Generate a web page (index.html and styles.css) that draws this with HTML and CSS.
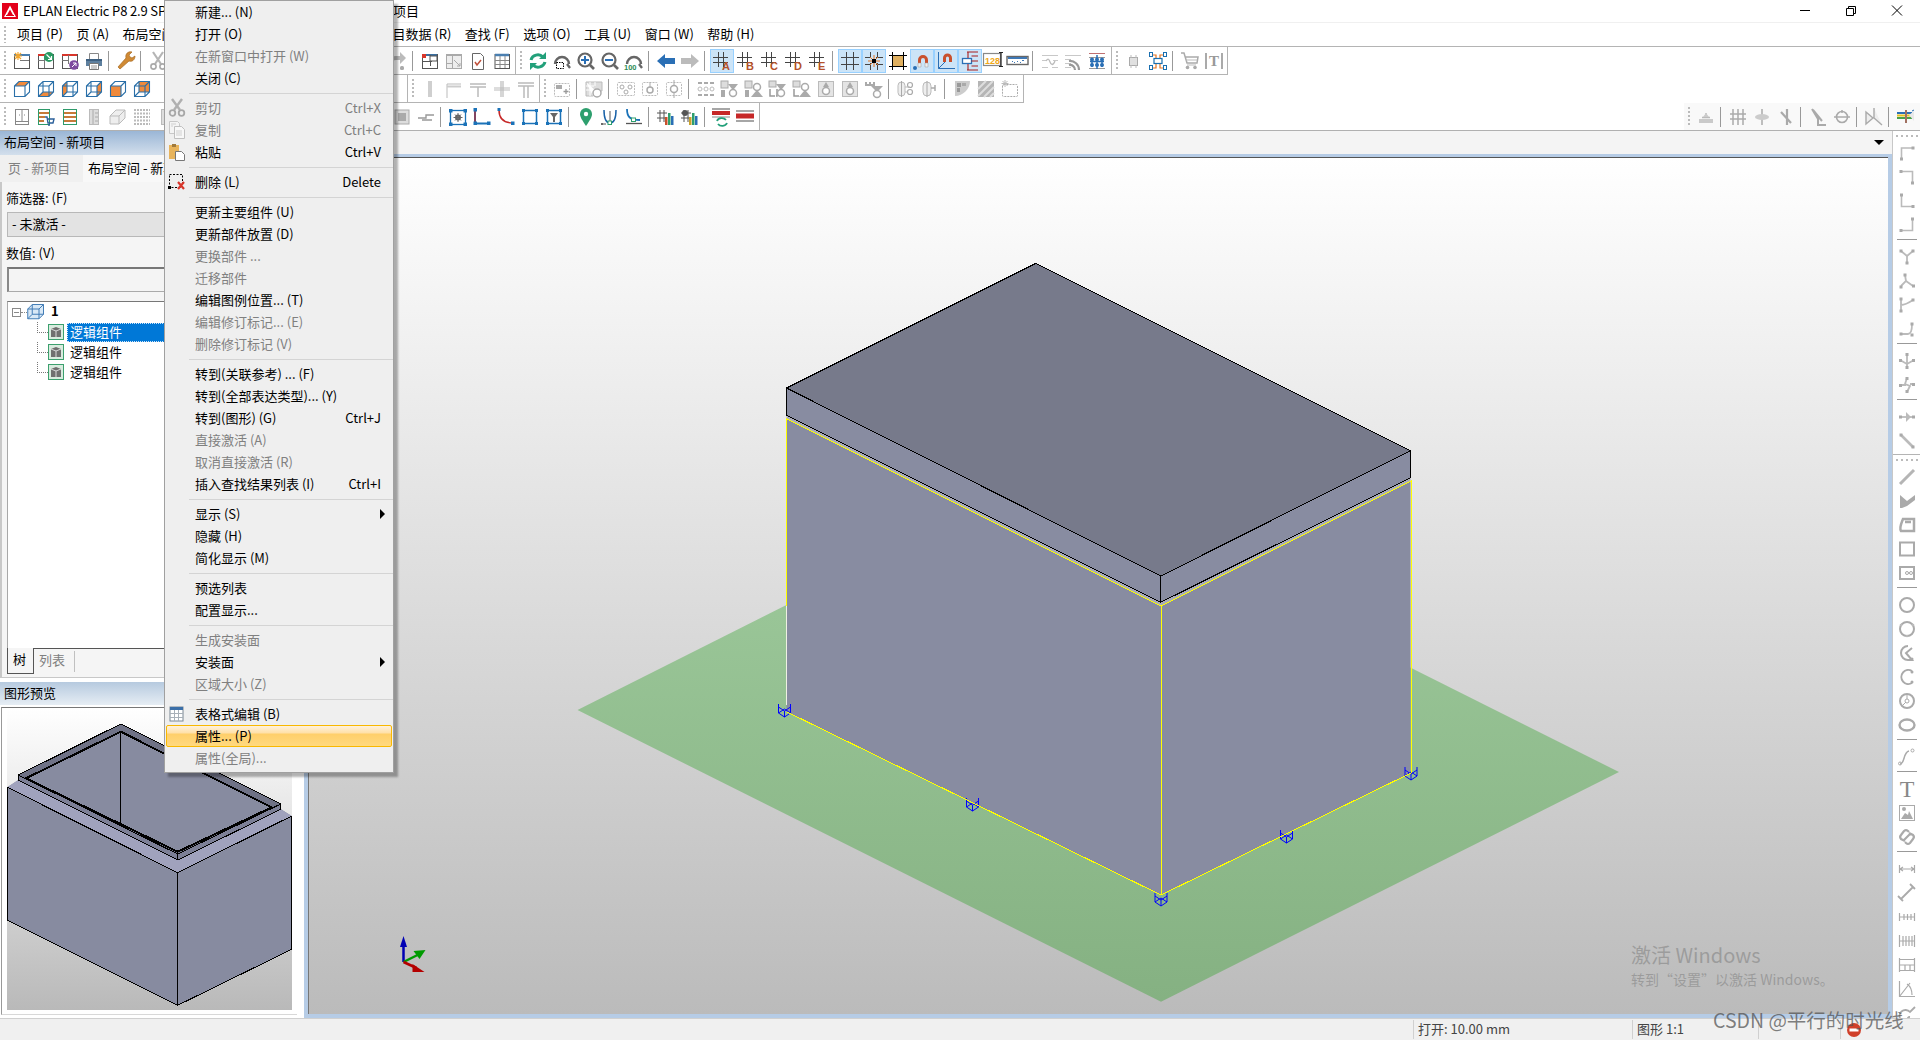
FILE: index.html
```html
<!DOCTYPE html>
<html lang="zh-CN">
<head>
<meta charset="utf-8">
<title>EPLAN Electric P8</title>
<link rel="stylesheet" href="styles.css">
</head>
<body>
<svg class="defs" aria-hidden="true">
<defs>
<symbol id="n1" viewBox="-3 -3 24 24"><rect x="1.5" y="2.5" width="15" height="14" fill="#fff" stroke="#555"/><path d="M1 3h16" stroke="#4a7fb0" stroke-width="2"/><path d="M5 0v8M1 4h8M2 1l6 6M8 1L2 7" stroke="#f2a62e" stroke-width="1.2"/><path d="M7 8.5h9" stroke="#777"/></symbol>
<symbol id="n2" viewBox="-3 -3 24 24"><rect x="1.5" y="2.5" width="15" height="14" fill="#fff" stroke="#555"/><path d="M1 3h8" stroke="#d8362b" stroke-width="2"/><path d="M7.5 3v13M1 8.5h7" stroke="#777"/><circle cx="12" cy="5" r="5" fill="#2a9a62"/><path d="M9.5 2.5l5 5M14.5 4v3.5H11" stroke="#fff" fill="none" stroke-width="1.2"/></symbol>
<symbol id="n3" viewBox="-3 -3 24 24"><rect x="1.5" y="2.5" width="15" height="14" fill="#fff" stroke="#555"/><path d="M1 3h15" stroke="#d8362b" stroke-width="2"/><path d="M7.5 3v9M1 8.5h6" stroke="#777"/><circle cx="13" cy="13" r="4.8" fill="#7d4a9e"/><path d="M11 15l4-4M12 11h3v3" stroke="#fff" fill="none"/></symbol>
<symbol id="pr" viewBox="-3 -3 24 24"><path d="M4.5 1.5h9v6h-9z" fill="#fff" stroke="#888"/><path d="M1 7h16v7H1z" fill="#5d7f9e"/><path d="M1 7h16v2H1z" fill="#3c5f80"/><path d="M4.5 11.5h9v6h-9z" fill="#fff" stroke="#777"/><path d="M6 14h6M6 16h6" stroke="#999"/></symbol>
<symbol id="wr" viewBox="-3 -3 24 24"><path d="M1 15l2 2 9-8c3 1 6-1 6-5l-3 2-2-1-1-2 3-3c-4-1-7 2-6 6z" fill="#d08a34" stroke="#a66a22" stroke-width=".7"/></symbol>
<symbol id="sc" viewBox="-3 -3 24 24"><path d="M4 0l8 12M14 0L6 12" stroke="#b5b5b5" stroke-width="2.2"/><circle cx="4.5" cy="14.5" r="2.6" fill="none" stroke="#aaa" stroke-width="1.6"/><circle cx="13.5" cy="14.5" r="2.6" fill="none" stroke="#aaa" stroke-width="1.6"/></symbol>
<symbol id="rd" viewBox="-3 -3 24 24"><path d="M1 9a6 6 0 0 1 6-5h4V0l6 6-6 6V8H7" fill="#bbb"/><rect x="11" y="14" width="4" height="4" rx="1.5" fill="#aaa"/></symbol>
<symbol id="w1" viewBox="-3 -3 24 24"><rect x="1.5" y="2.5" width="15" height="14" fill="#fff" stroke="#555"/><path d="M1 3h15" stroke="#3b6f9f" stroke-width="2"/><rect x="1" y="2" width="4" height="4" fill="#d8362b"/><path d="M1 9.500h10M9.500 3v11" stroke="#555"/><rect x="9" y="4" width="7" height="5" fill="#fff" stroke="#555"/></symbol>
<symbol id="w2" viewBox="-3 -3 24 24"><rect x="1.500" y="2.500" width="15" height="14" fill="#eee" stroke="#aaa"/><path d="M2 3.500h14M2 11.500h5M7.500 4v12M9 8l6 6M15 11v3h-3" stroke="#aaa" fill="none"/></symbol>
<symbol id="dc" viewBox="-3 -3 24 24"><path d="M3.500 1.500h8l3 3v13h-11z" fill="#fff" stroke="#666"/><path d="M6 10l2 3 4-5" stroke="#c0503a" stroke-width="1.500" fill="none"/></symbol>
<symbol id="tb" viewBox="-3 -3 24 24"><rect x="2" y="2.500" width="14.500" height="14" fill="#fff" stroke="#555"/><path d="M2 3h14" stroke="#4a7fb0" stroke-width="2.500"/><path d="M2 8.500h14M2 12.500h14M7 4v12M12 4v12" stroke="#888"/></symbol>
<symbol id="rf" viewBox="-3 -3 24 24"><path d="M2 8a7 6.500 0 0 1 12-3M16 10a7 6.500 0 0 1-12 3" stroke="#22a07a" stroke-width="3" fill="none"/><path d="M17 0v7h-7zM1 18v-7h7z" fill="#22a07a"/></symbol>
<symbol id="zw" viewBox="-3 -3 24 24"><path d="M2 12a7 7 0 1 1 14 0" stroke="#666" stroke-width="2.400" fill="none"/><path d="M14 12l3 4" stroke="#666" stroke-width="2.400"/><rect x="3.500" y="10.500" width="7" height="6" fill="#fff" stroke="#000" stroke-dasharray="1.500 1"/></symbol>
<symbol id="zp" viewBox="-3 -3 24 24"><circle cx="8" cy="8" r="6.500" fill="#fff" stroke="#666" stroke-width="2.200"/><path d="M13 13l4 4" stroke="#666" stroke-width="2.600"/><path d="M4 8h8M8 4v8" stroke="#2a6fb5" stroke-width="2"/></symbol>
<symbol id="zm" viewBox="-3 -3 24 24"><circle cx="8" cy="8" r="6.500" fill="#fff" stroke="#666" stroke-width="2.200"/><path d="M13 13l4 4" stroke="#666" stroke-width="2.600"/><path d="M4 8h8" stroke="#2a6fb5" stroke-width="2"/></symbol>
<symbol id="z1" viewBox="-3 -3 24 24"><path d="M2 12a7 7 0 1 1 14 0" stroke="#666" stroke-width="2.400" fill="none"/><path d="M14 12l3 4" stroke="#666" stroke-width="2.400"/><text x="-1" y="18" class="t100">100</text></symbol>
<symbol id="al" viewBox="-3 -3 24 24"><path d="M0 9l8-7v4h10v6H8v4z" fill="#2a6fb5"/></symbol>
<symbol id="ar" viewBox="-3 -3 24 24"><path d="M18 9l-8-7v4H0v6h10v4z" fill="#bbb"/></symbol>
<symbol id="gr" viewBox="-3 -3 24 24"><path d="M5.500 0v15M10.500 0v15M0 5.500h15M0 10.500h15" stroke="#444"/></symbol>
<symbol id="gc" viewBox="-3 -3 24 24"><path d="M5.500 0v6M5.500 11v7M12.500 0v6M12.500 11v7M0 5.500h6M11 5.500h7M0 12.500h6M11 12.500h7" stroke="#444"/><path d="M9 3v12M3 9h12M5 5l8 8M13 5l-8 8" stroke="#e8741e"/><rect x="7" y="7" width="4" height="4" fill="#000"/></symbol>
<symbol id="fg" viewBox="-3 -3 24 24"><path d="M5.500 0v18M12.500 0v18M0 5.500h18M0 12.500h18" stroke="#444"/></symbol>
<symbol id="cr" viewBox="-3 -3 24 24"><rect x="4" y="4" width="10" height="10" fill="#e0b060"/><path d="M3.500 0v18M14.500 0v18M0 3.500h18M0 14.500h18" stroke="#000"/></symbol>
<symbol id="m1" viewBox="-3 -3 24 24"><path d="M5 13V8a5 5 0 0 1 10 0v5h-3V8a2 2 0 0 0-4 0v5z" fill="#c9502c"/><path d="M5 11h3v4H5zM12 11h3v4h-3z" fill="#eee" stroke="#999" stroke-width=".5"/><circle cx="2" cy="16" r="2" fill="#2a6fb5"/></symbol>
<symbol id="m2" viewBox="-3 -3 24 24"><path d="M6 10V6a4.500 4.500 0 0 1 9 0v4h-3V6a1.500 1.500 0 0 0-3 0v4z" fill="#c9502c"/><path d="M1.500 0v16.500H18M1.500 16.500L8 10" stroke="#2a6fb5" fill="none"/></symbol>
<symbol id="m3" viewBox="-3 -3 24 24"><rect x="1.500" y="6.500" width="9" height="5" fill="#fff" stroke="#2a6fb5" stroke-width="1.300"/><path d="M7 0v6M6 0h11M10.500 4H17M10.500 9H17M10.500 14H17M7 12v6M6 18h11" stroke="#a81e1e" fill="none" stroke-width="1.100"/></symbol>
<symbol id="n8" viewBox="-3 -3 24 24"><rect x="-1.500" y="1.500" width="17" height="12" fill="#fff" stroke="#888" stroke-width="1.200"/><text x="0" y="11.500" class="t128">128</text><path d="M16 0v15M14 .5h4M14 14.500h4" stroke="#222" stroke-width="1.200"/></symbol>
<symbol id="rl" viewBox="-3 -3 24 24"><rect x="-2" y="4.500" width="21" height="8" fill="#fff" stroke="#666" stroke-width="1.400"/><rect x="-1" y="5" width="19" height="2" fill="#3f78b5"/><path d="M5 10.500h1M8 9.500h1M11 10.500h1M13 8.500h2M3 9.500h1" stroke="#3f78b5"/></symbol>
<symbol id="l1" viewBox="-3 -3 24 24"><path d="M1 3.500h16M1 15.500h6M11 15.500h6M1 8.500h5M12 8.500h5" stroke="#c8c8c8"/><path d="M5 9c2-3 3-2 4 1s3 4 5-1" stroke="#bbb" stroke-width="1.300" fill="none"/></symbol>
<symbol id="l2" viewBox="-3 -3 24 24"><path d="M0 3.500h16M0 7.500h6M0 11.500h6M0 15.500h6" stroke="#c8c8c8"/><path d="M4 9a9 9 0 0 1 10 9M4 13a5 5 0 0 1 6 5" stroke="#999" stroke-width="2.200" fill="none"/></symbol>
<symbol id="l3" viewBox="-3 -3 24 24"><path d="M0 1.500h16" stroke="#c07070"/><path d="M0 5.500h16M0 16.500h16" stroke="#999"/><path d="M8 3v14M3 7v8M13 7v8M1 9.500h14" stroke="#2a6fb5" stroke-width="1.500"/><circle cx="3" cy="7.500" r="2" fill="#2a6fb5"/><circle cx="8" cy="7.500" r="2" fill="#2a6fb5"/><circle cx="13" cy="7.500" r="2" fill="#2a6fb5"/><circle cx="3" cy="13" r="2" fill="#2a6fb5"/><circle cx="8" cy="13" r="2" fill="#2a6fb5"/><circle cx="13" cy="13" r="2" fill="#2a6fb5"/></symbol>
<symbol id="cp" viewBox="-3 -3 24 24"><rect x="4.500" y="5.500" width="8" height="8" fill="#e0e0e0" stroke="#aaa"/><path d="M6 3v3M11 3v3M6 13v3M11 13v3" stroke="#bbb"/></symbol>
<symbol id="bo" viewBox="-3 -3 24 24"><path d="M3 3h4v5h4V3h4M3 16h4v-5h4v5h4" stroke="#e8741e" stroke-width="1.200" fill="none"/><rect x="5" y="6.500" width="8" height="5" fill="#fff" stroke="#1a6fb0" stroke-width="1.200"/><rect x="0.500" y="0.500" width="3" height="4" fill="#fff" stroke="#1a6fb0"/><rect x="14.500" y="0.500" width="3" height="4" fill="#fff" stroke="#1a6fb0"/><rect x="0.500" y="13.500" width="3" height="4" fill="#fff" stroke="#1a6fb0"/><rect x="14.500" y="13.500" width="3" height="4" fill="#fff" stroke="#1a6fb0"/></symbol>
<symbol id="ca" viewBox="-3 -3 24 24"><path d="M0 1h3l3 10h10l1-6H4" stroke="#aaa" stroke-width="1.500" fill="none"/><path d="M5 8h11M6 13h9" stroke="#bbb"/><circle cx="6.500" cy="15.500" r="1.800" fill="#aaa"/><circle cx="14" cy="15.500" r="1.800" fill="#aaa"/></symbol>
<symbol id="tx" viewBox="-3 -3 24 24"><path d="M1 1v16M17 1v16" stroke="#aaa" stroke-width="2"/><text x="4" y="14" class="tser">T</text></symbol>

<symbol id="c1" viewBox="-3 -3 24 24"><path d="M1.500 6L6 1.500h10.500L12 6z" fill="#f08a3c"/><path d="M1.500 6L6 1.500h10.500V12L12 16.500H1.500zM1.500 6H12v10.500M12 6l4.500-4.500" fill="none" stroke="#2a6fa8" stroke-width="1.100"/></symbol>
<symbol id="c2" viewBox="-3 -3 24 24"><path d="M1.500 16.500L6 12h10.500L12 16.500z" fill="#f08a3c"/><path d="M1.500 6L6 1.500h10.500V12L12 16.500H1.500zM1.500 6H12v10.500M12 6l4.500-4.500M6 1.500V12M6 12h10.500M6 12l-4.500 4.500" fill="none" stroke="#2a6fa8" stroke-width="1.100"/></symbol>
<symbol id="c3" viewBox="-3 -3 24 24"><path d="M1.500 6L6 1.500V12l-4.500 4.500z" fill="#f08a3c"/><path d="M1.500 6L6 1.500h10.500V12L12 16.500H1.500zM1.500 6H12v10.500M12 6l4.500-4.500M6 1.500V12M6 12h10.500M6 12l-4.500 4.500" fill="none" stroke="#2a6fa8" stroke-width="1.100"/></symbol>
<symbol id="c4" viewBox="-3 -3 24 24"><path d="M12 6l4.500-4.500V12L12 16.500z" fill="#f08a3c"/><path d="M1.500 6L6 1.500h10.500V12L12 16.500H1.500zM1.500 6H12v10.500M12 6l4.500-4.500M6 1.500V12M6 12h10.500M6 12l-4.500 4.500" fill="none" stroke="#2a6fa8" stroke-width="1.100"/></symbol>
<symbol id="c5" viewBox="-3 -3 24 24"><path d="M1.500 6H12v10.500H1.500z" fill="#f08a3c"/><path d="M1.500 6L6 1.500h10.500V12L12 16.500H1.500zM1.500 6H12v10.500M12 6l4.500-4.500" fill="none" stroke="#2a6fa8" stroke-width="1.100"/></symbol>
<symbol id="c6" viewBox="-3 -3 24 24"><path d="M6 1.500h10.500V12H6z" fill="#f08a3c"/><path d="M1.500 6L6 1.500h10.500V12L12 16.500H1.500zM1.500 6H12v10.500M12 6l4.500-4.500M6 1.500V12M6 12h10.500M6 12l-4.500 4.500" fill="none" stroke="#2a6fa8" stroke-width="1.100"/></symbol>

<symbol id="k1" viewBox="-3 -3 24 24"><rect x="2.500" y="1.500" width="13" height="15" fill="#fff" stroke="#888"/><path d="M9 1.500v12M2.500 13.500h13M6 7h1M11 7h1" stroke="#888"/></symbol>
<symbol id="k2" viewBox="-3 -3 24 24"><rect x="1.500" y="1.500" width="11" height="15" fill="#fff" stroke="#2e9a6a"/><path d="M2 5h10M2 9h6M2 13h5" stroke="#c67a3a" stroke-width="2"/><path d="M8 9h2l1 6h5l1-4h-6" stroke="#2a5f9a" stroke-width="1.400" fill="none"/><circle cx="12" cy="17" r="1" fill="#2a5f9a"/></symbol>
<symbol id="k3" viewBox="-3 -3 24 24"><rect x="2.500" y="1.500" width="13" height="15" fill="#fff" stroke="#2e9a6a"/><path d="M3 5h12M3 9h12M3 13h12" stroke="#c67a3a" stroke-width="2"/></symbol>
<symbol id="k4" viewBox="-3 -3 24 24"><rect x="4.500" y="1.500" width="9" height="15" fill="#ddd" stroke="#bbb"/><path d="M8 2v14M10 5h3M10 9h3M10 13h3" stroke="#aaa"/></symbol>
<symbol id="k5" viewBox="-3 -3 24 24"><path d="M1 8l6-6h9v8l-6 6H1z" fill="#eee" stroke="#bbb"/><path d="M1 8h9v8M10 8l6-6" fill="none" stroke="#bbb"/></symbol>
<symbol id="k6" viewBox="-3 -3 24 24"><path d="M1 2h16M1 9h16M1 16h16M1 5.500h16M1 12.500h16" stroke="#bbb" stroke-dasharray="2 1" stroke-width="2"/></symbol>
<symbol id="k7" viewBox="-3 -3 24 24"><rect x="2" y="2" width="14" height="14" fill="#ddd" stroke="#aaa"/><rect x="5" y="5" width="8" height="8" fill="#aaa"/></symbol>
<symbol id="k8" viewBox="-3 -3 24 24"><path d="M1 10h8V7h8M5 12h10" stroke="#999" stroke-width="1.400" fill="none"/></symbol>

<symbol id="h1" viewBox="-3 -3 24 24"><path d="M8 1v16M10 1v16" stroke="#bbb" stroke-width="1.400"/></symbol>
<symbol id="h2" viewBox="-3 -3 24 24"><path d="M2 18V4h14M2 18" stroke="#bbb" fill="none"/><path d="M2 6.500h14" stroke="#ccc" stroke-width="2"/></symbol>
<symbol id="h3" viewBox="-3 -3 24 24"><path d="M1 4h16M1 7h16M9 7v10" stroke="#bbb" stroke-width="1.500"/></symbol>
<symbol id="h4" viewBox="-3 -3 24 24"><path d="M8 1v16M10 1v16M1 8h16M1 10h16" stroke="#bbb" stroke-width="1.200"/></symbol>
<symbol id="h5" viewBox="-3 -3 24 24"><path d="M1 3h16M1 6h16M7 6v12M11 6v12" stroke="#bbb" stroke-width="1.500"/></symbol>
<symbol id="d1" viewBox="-3 -3 24 24"><rect x="1.500" y="3.500" width="15" height="13" rx="1" fill="none" stroke="#bbb" stroke-dasharray="2 1"/><path d="M3 6h6M3 8h6" stroke="#aaa" stroke-width="2"/><path d="M13 9v5M10.500 11.500h5" stroke="#999" stroke-width="1.300"/></symbol>
<symbol id="d2" viewBox="-3 -3 24 24"><path d="M1 2h16v9h-6M1 2v14h7" stroke="#bbb" fill="#ddd"/><path d="M1 6h8M1 10h6M5 2v14M10 2v4" stroke="#fff"/><circle cx="12" cy="13" r="4" fill="#fff" stroke="#aaa" stroke-width="1.500"/></symbol>
<symbol id="d3" viewBox="-3 -3 24 24"><rect x=".5" y="2.500" width="17" height="13" rx="1" fill="none" stroke="#bbb" stroke-dasharray="2 1"/><circle cx="5" cy="7" r="2" fill="none" stroke="#aaa"/><circle cx="13" cy="7" r="2" fill="none" stroke="#aaa"/><circle cx="9" cy="12" r="2" fill="none" stroke="#aaa"/></symbol>
<symbol id="d4" viewBox="-3 -3 24 24"><rect x="1.500" y="2.500" width="15" height="13" rx="1" fill="none" stroke="#bbb" stroke-dasharray="2 1"/><circle cx="9" cy="10" r="3" fill="none" stroke="#aaa" stroke-width="1.500"/><path d="M9 2v5" stroke="#aaa"/></symbol>
<symbol id="d5" viewBox="-3 -3 24 24"><rect x="1.500" y="2.500" width="15" height="13" rx="1" fill="none" stroke="#bbb" stroke-dasharray="2 1"/><circle cx="9" cy="9" r="3.500" fill="none" stroke="#aaa" stroke-width="1.500"/><path d="M9 0v5M9 13v5" stroke="#aaa"/></symbol>
<symbol id="e1" viewBox="-3 -3 24 24"><path d="M1 3h4M7 3h4M13 3h4M1 15h4M7 15h4M13 15h4" stroke="#aaa" stroke-width="2"/><circle cx="3" cy="9" r="2" fill="none" stroke="#bbb"/><circle cx="9" cy="9" r="2" fill="none" stroke="#bbb"/><circle cx="15" cy="9" r="2" fill="none" stroke="#bbb"/></symbol>
<symbol id="e2" viewBox="-3 -3 24 24"><rect x="0" y="1" width="7" height="7" fill="#ddd" stroke="#aaa"/><rect x="0" y="10" width="4" height="7" fill="#aaa"/><path d="M7 4h10l-4 5h-2z" fill="#aaa"/><circle cx="12" cy="13" r="3.500" fill="#fff" stroke="#aaa" stroke-width="1.500"/></symbol>
<symbol id="e3" viewBox="-3 -3 24 24"><rect x="0" y="1" width="7" height="7" fill="#ddd" stroke="#aaa"/><rect x="0" y="10" width="4" height="7" fill="#aaa"/><circle cx="12" cy="7" r="3.500" fill="#fff" stroke="#aaa" stroke-width="1.500"/><path d="M6 17h12l-5-6h-2z" fill="#aaa"/></symbol>
<symbol id="e4" viewBox="-3 -3 24 24"><rect x="0" y="1" width="7" height="6" fill="#ddd" stroke="#aaa"/><path d="M1 9v7h5M8 9v7h-1" stroke="#999" stroke-width="1.500" fill="none"/><path d="M7 4h10l-4 5h-2z" fill="#aaa"/><circle cx="12" cy="13" r="3.500" fill="#fff" stroke="#aaa" stroke-width="1.500"/></symbol>
<symbol id="e5" viewBox="-3 -3 24 24"><rect x="0" y="1" width="7" height="6" fill="#ddd" stroke="#aaa"/><path d="M1 9v7h5" stroke="#999" stroke-width="1.500" fill="none"/><circle cx="12" cy="7" r="3.500" fill="#fff" stroke="#aaa" stroke-width="1.500"/><path d="M6 17h12l-5-6h-2z" fill="#aaa"/></symbol>
<symbol id="e6" viewBox="-3 -3 24 24"><rect x="1.500" y="1.500" width="15" height="15" fill="#e4e4e4" stroke="#bbb"/><path d="M9 2l3 5H6z" fill="#aaa"/><circle cx="9" cy="11" r="3.500" fill="#fff" stroke="#aaa" stroke-width="1.500"/></symbol>
<symbol id="e7" viewBox="-3 -3 24 24"><path d="M0 2h2v2h2V2h2v2h2V2h2v4h8l-5 5h-2l-5-5H0z" fill="#aaa"/><circle cx="12" cy="14" r="3.500" fill="#fff" stroke="#aaa" stroke-width="1.500"/></symbol>
<symbol id="e8" viewBox="-3 -3 24 24"><rect x="1" y="2" width="7" height="14" rx="3.500" fill="#eee" stroke="#bbb"/><path d="M4.500 1v16" stroke="#aaa"/><circle cx="13" cy="5" r="2.500" fill="#fff" stroke="#aaa" stroke-width="1.200"/><circle cx="13" cy="12" r="2.500" fill="#fff" stroke="#aaa" stroke-width="1.200"/><path d="M8 7h5M8 12h3" stroke="#bbb"/></symbol>
<symbol id="e9" viewBox="-3 -3 24 24"><rect x="2" y="2" width="8" height="14" rx="4" fill="#eee" stroke="#bbb"/><path d="M6 1v16" stroke="#aaa"/><path d="M10 8h4M14 5v6" stroke="#aaa" stroke-width="1.500"/></symbol>
<symbol id="f1" viewBox="-3 -3 24 24"><path d="M2 1h15c0 8-7 15-15 15z" fill="#ccc"/><rect x="4" y="3" width="4" height="4" fill="#999"/><rect x="9" y="3" width="4" height="3" fill="#aaa"/><rect x="4" y="8" width="3" height="4" fill="#999"/></symbol>
<symbol id="f2" viewBox="-3 -3 24 24"><rect x="1" y="1" width="16" height="16" fill="#b5b5b5"/><path d="M1 9l8-8M1 16L16 1M7 17L17 7M13 17l4-4" stroke="#ddd" stroke-width="2"/></symbol>
<symbol id="f3" viewBox="-3 -3 24 24"><rect x="1.500" y="4.500" width="15" height="12" rx="1" fill="none" stroke="#aaa" stroke-dasharray="2 1"/><path d="M4 0v7M.5 3.500h7M1.500 1l5 5M6.500 1l-5 5" stroke="#bbb"/></symbol>

<symbol id="g1" viewBox="-3 -3 24 24"><rect x="1.500" y="2.500" width="15" height="14" fill="#fff" stroke="#1a72b8" stroke-width="1.300"/><g fill="#1a72b8"><rect x="0" y="1" width="3.500" height="3.500"/><rect x="14.500" y="1" width="3.500" height="3.500"/><rect x="0" y="14.500" width="3.500" height="3.500"/><rect x="14.500" y="14.500" width="3.500" height="3.500"/></g><circle cx="9" cy="9.500" r="3" fill="#666"/><circle cx="9" cy="9.500" r="1" fill="#fff"/><path d="M9 5v9M4.500 9.500h9M6 6.500l6 6M12 6.500l-6 6" stroke="#666"/></symbol>
<symbol id="g2" viewBox="-3 -3 24 24"><path d="M2 1v14.500h14" stroke="#1a72b8" stroke-width="2" fill="none"/><path d="M2 1v14" stroke="#c62828" stroke-width="1.200"/><g fill="#1a72b8"><rect x=".5" y="0" width="3.500" height="3.500"/><rect x=".5" y="13.500" width="3.500" height="3.500"/><rect x="14" y="13.500" width="3.500" height="3.500"/></g></symbol>
<symbol id="g3" viewBox="-3 -3 24 24"><path d="M2 2c0 8 4 13 14 13" stroke="#c62828" stroke-width="1.500" fill="none"/><g fill="#1a72b8"><rect x=".5" y="0" width="3" height="3"/><rect x="14" y="13.500" width="3.500" height="3.500"/></g></symbol>
<symbol id="g4" viewBox="-3 -3 24 24"><rect x="2.500" y="2.500" width="13" height="13" fill="#fff" stroke="#1a72b8" stroke-width="1.500"/><g fill="#1a72b8"><rect x="1" y="1" width="3" height="3"/><rect x="14" y="1" width="3" height="3"/><rect x="1" y="14" width="3" height="3"/><rect x="14" y="14" width="3" height="3"/></g></symbol>
<symbol id="g5" viewBox="-3 -3 24 24"><rect x="2.500" y="2.500" width="13" height="13" fill="#fff" stroke="#1a72b8" stroke-width="1.500"/><g fill="#1a72b8"><rect x="1" y="1" width="3" height="3"/><rect x="14" y="1" width="3" height="3"/><rect x="1" y="14" width="3" height="3"/><rect x="14" y="14" width="3" height="3"/></g><path d="M5 5h8l-3 4v5H8V9z" fill="#666"/></symbol>
<symbol id="p1" viewBox="-3 -3 24 24"><path d="M9 18C5 12 3 9 3 6a6 6 0 0 1 12 0c0 3-2 6-6 12z" fill="#2e9f6e"/><circle cx="9" cy="6" r="2.200" fill="#fff"/></symbol>
<symbol id="p2" viewBox="-3 -3 24 24"><path d="M3 2c0 10 2 13 6 13s6-3 6-13" stroke="#1a62a8" stroke-width="1.500" fill="none"/><path d="M0 16h5M9 3v11" stroke="#555"/><rect x="7" y="13" width="3.500" height="3.500" fill="#fff" stroke="#2e9f6e"/><circle cx="1" cy="16" r="1" fill="#555"/></symbol>
<symbol id="p3" viewBox="-3 -3 24 24"><path d="M2 1c0 8 3 11 13 11" stroke="#1a72b8" stroke-width="1.800" fill="none"/><path d="M1 15.500h16" stroke="#555" stroke-width="1.300"/><rect x="6.500" y="10" width="4" height="3.500" fill="#fff" stroke="#2e9f6e"/></symbol>
<symbol id="q1" viewBox="-3 -3 24 24"><path d="M3 2v12M7 2v12M0 5h10M0 10h10" stroke="#555"/><rect x="8" y="9" width="2.500" height="8" fill="#c9502c"/><rect x="11" y="5" width="2.500" height="12" fill="#2e9f6e"/><rect x="14" y="8" width="2.500" height="9" fill="#2a6fb5"/></symbol>
<symbol id="q2" viewBox="-3 -3 24 24"><path d="M3 2v12M7 2v12M0 5h10M0 10h10" stroke="#555"/><circle cx="4" cy="5" r="3" fill="#555"/><rect x="8" y="9" width="2.500" height="8" fill="#c9a22c"/><rect x="11" y="5" width="2.500" height="12" fill="#2e9f6e"/><rect x="14" y="8" width="2.500" height="9" fill="#2a6fb5"/></symbol>
<symbol id="r1" viewBox="-3 -3 24 24"><path d="M-1 1h18" stroke="#888" stroke-width="1.500"/><path d="M-1 5h18" stroke="#c62828" stroke-width="4"/><path d="M-1 9h18" stroke="#888" stroke-width="1"/><path d="M4 13a5 4 0 0 1 9-1M14 15a5 4 0 0 1-9 1" stroke="#22a07a" stroke-width="1.800" fill="none"/></symbol>
<symbol id="r2" viewBox="-3 -3 24 24"><path d="M-1 3h18" stroke="#888" stroke-width="1.500"/><path d="M-1 8h18" stroke="#c62828" stroke-width="5"/><path d="M-1 13h18" stroke="#888" stroke-width="1.500"/></symbol>
<symbol id="s1" viewBox="-3 -3 24 24"><path d="M2 14h14M2 12h14M5 9.500h8M9 5v5" stroke="#bbb" stroke-width="1.500"/><path d="M6 9l3-4 3 4" fill="#ccc"/></symbol>
<symbol id="s2" viewBox="-3 -3 24 24"><path d="M4 1v16M9 1v16M14 1v16M1 6h16M1 11h16" stroke="#aaa" stroke-width="1.500"/></symbol>
<symbol id="s3" viewBox="-3 -3 24 24"><path d="M9 1v16" stroke="#aaa" stroke-width="1.500"/><ellipse cx="9" cy="9" rx="7" ry="3" fill="#ccc"/></symbol>
<symbol id="s4" viewBox="-3 -3 24 24"><path d="M10 1v16M4 4l10 11" stroke="#aaa" stroke-width="2.200"/></symbol>
<symbol id="s5" viewBox="-3 -3 24 24"><path d="M3 1l6 10v6h8M4 2l9 11" stroke="#aaa" stroke-width="2" fill="none"/></symbol>
<symbol id="s6" viewBox="-3 -3 24 24"><circle cx="9" cy="9" r="5.500" fill="none" stroke="#aaa" stroke-width="1.600"/><path d="M1 9h16M9 2v3" stroke="#aaa" stroke-width="1.500"/></symbol>
<symbol id="s7" viewBox="-3 -3 24 24"><path d="M9 0v10l8 7M1 4l7 6-7 6z" stroke="#aaa" stroke-width="1.400" fill="#eee"/></symbol>
<symbol id="s8" viewBox="-3 -3 24 24"><path d="M0 5h15" stroke="#2a6fb5" stroke-width="2"/><path d="M0 7.500h15" stroke="#e4c020" stroke-width="2"/><path d="M0 10h15" stroke="#4aa04a" stroke-width="2"/><path d="M9 2v13" stroke="#a07060" stroke-width="2"/><path d="M12 7l5-4v10z" fill="#e8e8e8"/><path d="M15 3l2-1" stroke="#2a6fb5"/></symbol>

<symbol id="v1" viewBox="-3 -3 24 24"><path d="M3.500 15V4H15" stroke="#bbb" stroke-width="1.600" fill="none"/><rect x="2" y="13.500" width="3" height="3" fill="#aaa"/><rect x="13.500" y="2.500" width="3" height="3" fill="#aaa"/></symbol>
<symbol id="v2" viewBox="-3 -3 24 24"><path d="M3 3.500h11.500V15" stroke="#bbb" stroke-width="1.600" fill="none"/><rect x="1.500" y="2" width="3" height="3" fill="#aaa"/><rect x="13" y="13.500" width="3" height="3" fill="#aaa"/></symbol>
<symbol id="v3" viewBox="-3 -3 24 24"><path d="M3.500 3v11.500H15" stroke="#bbb" stroke-width="1.600" fill="none"/><rect x="2" y="1.500" width="3" height="3" fill="#aaa"/><rect x="13.500" y="13" width="3" height="3" fill="#aaa"/></symbol>
<symbol id="v4" viewBox="-3 -3 24 24"><path d="M14.500 3v11.500H3" stroke="#bbb" stroke-width="1.600" fill="none"/><rect x="13" y="1.500" width="3" height="3" fill="#aaa"/><rect x="1.500" y="13" width="3" height="3" fill="#aaa"/></symbol>
<symbol id="v5" viewBox="-3 -3 24 24"><path d="M3 3l6 5 6-5M9 8v7" stroke="#bbb" stroke-width="1.800" fill="none"/><rect x="1.500" y="1.500" width="3" height="3" fill="#aaa"/><rect x="13.500" y="1.500" width="3" height="3" fill="#aaa"/><rect x="7.500" y="13.500" width="3" height="3" fill="#aaa"/></symbol>
<symbol id="v6" viewBox="-3 -3 24 24"><path d="M7 3l1 6-5 5M8 9l7 5" stroke="#bbb" stroke-width="1.800" fill="none"/><rect x="5.500" y="1.500" width="3" height="3" fill="#aaa"/><rect x="1.500" y="13.500" width="3" height="3" fill="#aaa"/><rect x="14" y="12.500" width="3" height="3" fill="#aaa"/></symbol>
<symbol id="v7" viewBox="-3 -3 24 24"><path d="M3 3v6c3 0 9-3 12-5M3 9v6" stroke="#bbb" stroke-width="1.800" fill="none"/><rect x="1.500" y="1.500" width="3" height="3" fill="#aaa"/><rect x="13.500" y="2.500" width="3" height="3" fill="#aaa"/><rect x="1.500" y="13.500" width="3" height="3" fill="#aaa"/></symbol>
<symbol id="v8" viewBox="-3 -3 24 24"><path d="M3 14h7c3 0 4-3 4-10" stroke="#bbb" stroke-width="1.800" fill="none"/><rect x="1.500" y="12.500" width="3" height="3" fill="#aaa"/><rect x="12.500" y="2.500" width="3" height="3" fill="#aaa"/><rect x="12.500" y="13.500" width="3" height="3" fill="#aaa"/></symbol>
<symbol id="v9" viewBox="-3 -3 24 24"><path d="M9 2v14M2 8l7 4 7-4" stroke="#bbb" stroke-width="1.800" fill="none"/><rect x="7.500" y="1" width="3" height="3" fill="#aaa"/><rect x="1" y="7" width="3" height="3" fill="#aaa"/><rect x="14" y="7" width="3" height="3" fill="#aaa"/><rect x="7.500" y="14" width="3" height="3" fill="#aaa"/></symbol>
<symbol id="va" viewBox="-3 -3 24 24"><path d="M9 2l-2 6 5 2-3 6M3 9h5M12 8h4" stroke="#bbb" stroke-width="1.800" fill="none"/><rect x="7.500" y="1" width="3" height="3" fill="#aaa"/><rect x="1" y="8" width="3" height="3" fill="#aaa"/><rect x="14" y="7" width="3" height="3" fill="#aaa"/><rect x="7.500" y="14" width="3" height="3" fill="#aaa"/></symbol>
<symbol id="vb" viewBox="-3 -3 24 24"><path d="M3 9h12" stroke="#bbb" stroke-width="1.800"/><path d="M8 4l5 5-5 5z" fill="#bbb"/><rect x="1" y="7.500" width="3" height="3" fill="#aaa"/><rect x="14" y="7.500" width="3" height="3" fill="#aaa"/></symbol>
<symbol id="vc" viewBox="-3 -3 24 24"><path d="M3 3l12 12" stroke="#bbb" stroke-width="2.600"/><rect x="1.500" y="1.500" width="3" height="3" fill="#aaa"/><rect x="13.500" y="13.500" width="3" height="3" fill="#aaa"/></symbol>
<symbol id="vd" viewBox="-3 -3 24 24"><path d="M2 16L16 2" stroke="#b5b5b5" stroke-width="3"/></symbol>
<symbol id="ve" viewBox="-3 -3 24 24"><path d="M2 16V3l7 6 8-6v5l-8 6-5 2z" fill="#aaa"/></symbol>
<symbol id="vf" viewBox="-3 -3 24 24"><path d="M5 3h11v12H3c-2-3 0-7 2-12zM7 6h6" fill="none" stroke="#aaa" stroke-width="2.500"/></symbol>
<symbol id="vg" viewBox="-3 -3 24 24"><rect x="2" y="2.500" width="14" height="13" fill="none" stroke="#aaa" stroke-width="2"/></symbol>
<symbol id="vh" viewBox="-3 -3 24 24"><rect x="2" y="3" width="14" height="12" fill="none" stroke="#aaa" stroke-width="2"/><circle cx="9" cy="9" r="1.500" fill="none" stroke="#aaa"/><circle cx="13" cy="9" r="1.500" fill="none" stroke="#aaa"/><path d="M10 9h2" stroke="#aaa"/></symbol>
<symbol id="vi" viewBox="-3 -3 24 24"><circle cx="9" cy="9" r="7" fill="none" stroke="#aaa" stroke-width="2"/></symbol>
<symbol id="vj" viewBox="-3 -3 24 24"><circle cx="9" cy="9" r="7" fill="none" stroke="#aaa" stroke-width="2"/><circle cx="3" cy="5" r="1.300" fill="#bbb"/><circle cx="15" cy="5" r="1.300" fill="#bbb"/><circle cx="9" cy="16" r="1.300" fill="#bbb"/></symbol>
<symbol id="vk" viewBox="-3 -3 24 24"><path d="M10 2a7 7 0 0 0 0 14h4L8 9l6-5" fill="none" stroke="#aaa" stroke-width="2"/><circle cx="14" cy="15" r="1.500" fill="#aaa"/></symbol>
<symbol id="vl" viewBox="-3 -3 24 24"><path d="M14 3a7 7 0 1 0 0 12" fill="none" stroke="#aaa" stroke-width="2"/><circle cx="14" cy="4" r="1.500" fill="#aaa"/><circle cx="14" cy="14" r="1.500" fill="#aaa"/></symbol>
<symbol id="vm" viewBox="-3 -3 24 24"><circle cx="9" cy="9" r="7" fill="none" stroke="#aaa" stroke-width="2"/><circle cx="9" cy="9" r="2" fill="none" stroke="#aaa"/><path d="M4 14l4-4M9 2v5" stroke="#aaa"/></symbol>
<symbol id="vn" viewBox="-3 -3 24 24"><ellipse cx="9" cy="9" rx="7.500" ry="5.500" fill="none" stroke="#aaa" stroke-width="2.400"/></symbol>
<symbol id="vo" viewBox="-3 -3 24 24"><path d="M2 16c5 0 3-12 9-13" fill="none" stroke="#aaa" stroke-width="1.500"/><circle cx="2" cy="15.500" r="1.500" fill="none" stroke="#aaa"/><circle cx="14.500" cy="2.500" r="1.500" fill="none" stroke="#aaa"/></symbol>
<symbol id="vp" viewBox="-3 -3 24 24"><text x="9" y="17" class="tser2">T</text></symbol>
<symbol id="vq" viewBox="-3 -3 24 24"><rect x="1.500" y="1.500" width="15" height="15" fill="#fff" stroke="#aaa"/><path d="M3 15l4-6 3 2 1-4 4 8z" fill="#aaa"/><circle cx="6" cy="5" r="2" fill="#aaa"/></symbol>
<symbol id="vr" viewBox="-3 -3 24 24"><path d="M7 13L3 11a3 3 0 0 1 0-4l3-4a3 3 0 0 1 4 0l1 1M11 5l4 2a3 3 0 0 1 0 4l-3 4a3 3 0 0 1-4 0l-1-1M6 12l6-6" fill="none" stroke="#aaa" stroke-width="2.200"/></symbol>
<symbol id="d0" viewBox="-3 -3 24 24"><path d="M1.500 5v8M16.500 5v8M2 9h14M5 7l-3 2 3 2M13 7l3 2-3 2" fill="none" stroke="#aaa" stroke-width="1.200"/></symbol>
<symbol id="da" viewBox="-3 -3 24 24"><path d="M3 15L15 3M0 12l5 5M12 0l5 5" fill="none" stroke="#aaa" stroke-width="1.800"/></symbol>
<symbol id="db" viewBox="-3 -3 24 24"><path d="M1.500 5v8M6 6v6M9.500 6v6M13 6v6M16.500 5v8M2 9h14" fill="none" stroke="#aaa" stroke-width="1.200"/></symbol>
<symbol id="dd" viewBox="-3 -3 24 24"><path d="M1.500 3v12M5 4v10M8 4v10M11 4v10M14 4v10M16.500 3v12M2 9h14" fill="none" stroke="#aaa" stroke-width="1.200"/></symbol>
<symbol id="de" viewBox="-3 -3 24 24"><path d="M1.500 2v14M16.500 2v14M2 3.500h14M2 14.500h14M7 9v5M12 9v5M2 9h14" fill="none" stroke="#aaa" stroke-width="1.200"/></symbol>
<symbol id="df" viewBox="-3 -3 24 24"><path d="M1.500 1v15.500H17M1.500 16.500L12 3M9 4c3 2 5 6 5 11" fill="none" stroke="#aaa" stroke-width="1.200"/></symbol>
<symbol id="dg" viewBox="-3 -3 24 24"><path d="M3 16a6 6 0 0 1 9-8L17 3M10 16a2 2 0 0 1 2-3" fill="none" stroke="#aaa" stroke-width="1.800"/></symbol>

<symbol id="mc" viewBox="-3 -3 24 24"><path d="M4 0l8 11M14 0L6 11" stroke="#b0b0b0" stroke-width="2.400"/><circle cx="4.500" cy="14" r="2.800" fill="none" stroke="#a8a8a8" stroke-width="1.800"/><circle cx="13.500" cy="14" r="2.800" fill="none" stroke="#a8a8a8" stroke-width="1.800"/></symbol>
<symbol id="mp" viewBox="-3 -3 24 24"><path d="M1.500 .5h8l2 2v10h-10z" fill="#f4f4f4" stroke="#c8c8c8"/><path d="M6.500 5.500h7l3 3v9h-10z" fill="#f8f8f8" stroke="#c0c0c0"/><path d="M3 3h5M3 5h2M8 10h6M8 12h6M8 14h6" stroke="#d0d0d0"/></symbol>
<symbol id="mv" viewBox="-3 -3 24 24"><path d="M1 2h10v14H1z" fill="#e8b45c"/><path d="M4 1h4v3H4z" fill="#a07a3c"/><path d="M7.500 8.500h6l3 3v6h-9z" fill="#fff" stroke="#777"/></symbol>
<symbol id="md" viewBox="-3 -3 24 24"><rect x="1.500" y="1.500" width="13" height="13" fill="none" stroke="#000" stroke-dasharray="2 1.500"/><rect x="0" y="13" width="3" height="3" fill="#000"/><path d="M10 9l6 7M16 9l-6 7" stroke="#d8362b" stroke-width="2.200"/></symbol>
<symbol id="mt" viewBox="-3 -3 24 24"><rect x="2" y="2" width="13" height="14" fill="#fff" stroke="#7b8794"/><rect x="2" y="2" width="13" height="3" fill="#3b6fa8"/><path d="M6.500 5v11M10.500 5v11M2 8.500h13M2 12.500h13" stroke="#a8b0b8"/></symbol>
<symbol id="tc" viewBox="-3 -3 24 24"><path d="M-2 5L4-1h15v13l-6 6H-2z" fill="#d8e8f6" stroke="#3f7ab5" stroke-width="1.300"/><path d="M-2 5h15v13M13 5l6-6M4-1v13M4 12h15M4 12l-6 6" fill="none" stroke="#3f7ab5" stroke-width="1.300"/></symbol>
<symbol id="ti" viewBox="0 0 16 16"><rect x=".5" y=".5" width="15" height="15" fill="#d9ecdf" stroke="#3ca06e"/><path d="M3 5l5-2 5 2v8H3z" fill="#6f6f6f"/><path d="M3 5l5 2 5-2M8 7v6" stroke="#d8d8d8" fill="none"/></symbol>
<g id="mk" fill="none" stroke="#0000ff"><path d="M-6-6V3L0 7L6 3V-6M-6-3L0 1L6-3M0 1V7M-6 3L0-1L6 3"/></g>
<linearGradient id="plate" gradientUnits="userSpaceOnUse" x1="0" y1="480" x2="0" y2="1002"><stop offset="0" stop-color="#a0cc9e"/><stop offset="1" stop-color="#85b182"/></linearGradient>
</defs>
</svg>

<div class="app">
  <header class="title">
    <svg class="logo" viewBox="0 0 16 16"><rect width="16" height="16" fill="#e3001b"/><path d="M8 2.500L14 14H2zM8 6.500L5 12h6z" fill="#fff" fill-rule="evenodd"/><path d="M4 12.500h8" stroke="#e3001b"/></svg>
    <span class="t-main">EPLAN Electric P8 2.9 SP1</span>
    <span class="t-rest">项目</span>
    <div class="win">
      <svg class="wb" viewBox="0 0 46 22"><path d="M18 10.500h10" stroke="#000"/></svg>
      <svg class="wb" viewBox="0 0 46 22"><path d="M18.500 8.500h7v7h-7zM20.500 8V6.500h7v7H26" fill="none" stroke="#000"/></svg>
      <svg class="wb" viewBox="0 0 46 22"><path d="M18 5.500l10 10M28 5.500l-10 10" stroke="#000"/></svg>
    </div>
  </header>
  <nav class="menubar">
    <i class="hgrip"></i>
    <span>项目 (P)</span><span>页 (A)</span><span>布局空间 (L)</span><span>编辑 (E)</span><span>视图 (V)</span><span>插入 (I)</span><span>项目数据 (R)</span><span>查找 (F)</span><span>选项 (O)</span><span>工具 (U)</span><span>窗口 (W)</span><span>帮助 (H)</span>
  </nav>

  <div class="row">
    <div class="seg">
      <i class="grip"></i>
      <svg class="ic"><use href="#n1"/></svg><svg class="ic"><use href="#n2"/></svg><svg class="ic"><use href="#n3"/></svg><svg class="ic"><use href="#pr"/></svg><i class="sep"></i>
      <svg class="ic"><use href="#wr"/></svg><i class="sep"></i>
      <svg class="ic"><use href="#sc"/></svg><i class="gap g216"></i>
      <svg class="ic"><use href="#rd"/></svg><i class="sep"></i>
      <svg class="ic"><use href="#w1"/></svg><svg class="ic"><use href="#w2"/></svg><svg class="ic"><use href="#dc"/></svg><svg class="ic"><use href="#tb"/></svg>
    </div>
    <div class="seg">
      <i class="grip"></i>
      <svg class="ic"><use href="#rf"/></svg><svg class="ic"><use href="#zw"/></svg><svg class="ic"><use href="#zp"/></svg><svg class="ic"><use href="#zm"/></svg><svg class="ic"><use href="#z1"/></svg><i class="sep"></i>
      <svg class="ic"><use href="#al"/></svg><svg class="ic"><use href="#ar"/></svg><i class="sep"></i>
      <svg class="ic on"><use href="#gr"/><text x="12" y="21" class="tl">A</text></svg><svg class="ic"><use href="#gr"/><text x="12" y="21" class="tl">B</text></svg><svg class="ic"><use href="#gr"/><text x="12" y="21" class="tl">C</text></svg><svg class="ic"><use href="#gr"/><text x="12" y="21" class="tl">D</text></svg><svg class="ic"><use href="#gr"/><text x="12" y="21" class="tl">E</text></svg><i class="sep"></i>
      <svg class="ic on"><use href="#fg"/></svg><svg class="ic on"><use href="#gc"/></svg><svg class="ic"><use href="#cr"/></svg><svg class="ic on"><use href="#m1"/></svg><svg class="ic on"><use href="#m2"/></svg><svg class="ic on"><use href="#m3"/></svg><svg class="ic"><use href="#n8"/></svg><svg class="ic"><use href="#rl"/></svg><i class="sep"></i>
      <svg class="ic"><use href="#l1"/></svg><svg class="ic"><use href="#l2"/></svg><svg class="ic"><use href="#l3"/></svg>
    </div>
    <div class="seg">
      <i class="grip"></i>
      <svg class="ic"><use href="#cp"/></svg><svg class="ic"><use href="#bo"/></svg><i class="sep"></i>
      <svg class="ic"><use href="#ca"/></svg><svg class="ic"><use href="#tx"/></svg>
    </div>
  </div>

  <div class="row">
    <div class="seg">
      <i class="grip"></i>
      <svg class="ic"><use href="#c1"/></svg><svg class="ic"><use href="#c2"/></svg><svg class="ic"><use href="#c3"/></svg><svg class="ic"><use href="#c4"/></svg><svg class="ic"><use href="#c5"/></svg><svg class="ic"><use href="#c6"/></svg><i class="gap g252"></i>
    </div>
    <div class="seg">
      <i class="grip"></i>
      <svg class="ic"><use href="#h1"/></svg><svg class="ic"><use href="#h2"/></svg><svg class="ic"><use href="#h3"/></svg><svg class="ic"><use href="#h4"/></svg><svg class="ic"><use href="#h5"/></svg>
    </div>
    <div class="seg">
      <i class="grip"></i>
      <svg class="ic"><use href="#d1"/></svg><i class="sep"></i>
      <svg class="ic"><use href="#d2"/></svg><i class="sep"></i>
      <svg class="ic"><use href="#d3"/></svg><svg class="ic"><use href="#d4"/></svg><svg class="ic"><use href="#d5"/></svg><i class="sep"></i>
      <svg class="ic"><use href="#e1"/></svg><svg class="ic"><use href="#e2"/></svg><svg class="ic"><use href="#e3"/></svg><svg class="ic"><use href="#e4"/></svg><svg class="ic"><use href="#e5"/></svg><svg class="ic"><use href="#e6"/></svg><svg class="ic"><use href="#e6"/></svg><svg class="ic"><use href="#e7"/></svg><i class="sep"></i>
      <svg class="ic"><use href="#e8"/></svg><svg class="ic"><use href="#e9"/></svg><i class="sep"></i>
      <svg class="ic"><use href="#f1"/></svg><svg class="ic"><use href="#f2"/></svg><svg class="ic"><use href="#f3"/></svg>
    </div>
  </div>

  <div class="row row-last">
    <div class="seg">
      <i class="grip"></i>
      <svg class="ic"><use href="#k1"/></svg><svg class="ic"><use href="#k2"/></svg><svg class="ic"><use href="#k3"/></svg><svg class="ic"><use href="#k4"/></svg><svg class="ic"><use href="#k5"/></svg><svg class="ic"><use href="#k6"/></svg><svg class="ic"><use href="#k4"/></svg><i class="gap g212"></i>
      <svg class="ic"><use href="#k7"/></svg><svg class="ic"><use href="#k8"/></svg><i class="sep"></i>
      <svg class="ic"><use href="#g1"/></svg><svg class="ic"><use href="#g2"/></svg><svg class="ic"><use href="#g3"/></svg><svg class="ic"><use href="#g4"/></svg><svg class="ic"><use href="#g5"/></svg><i class="sep"></i>
      <svg class="ic"><use href="#p1"/></svg><svg class="ic"><use href="#p2"/></svg><svg class="ic"><use href="#p3"/></svg><i class="sep"></i>
      <svg class="ic"><use href="#q1"/></svg><svg class="ic"><use href="#q2"/></svg><i class="sep"></i>
      <svg class="ic"><use href="#r1"/></svg><svg class="ic"><use href="#r2"/></svg>
    </div>
    <div class="seg seg-right">
      <i class="grip"></i>
      <svg class="ic"><use href="#s1"/></svg><i class="sep"></i>
      <svg class="ic"><use href="#s2"/></svg><svg class="ic"><use href="#s3"/></svg><svg class="ic"><use href="#s4"/></svg><i class="sep"></i>
      <svg class="ic"><use href="#s5"/></svg><svg class="ic"><use href="#s6"/></svg><i class="sep"></i>
      <svg class="ic"><use href="#s7"/></svg><i class="sep"></i>
      <svg class="ic"><use href="#s8"/></svg>
    </div>
  </div>

  <main class="main">
    <aside class="left">
      <div class="phead">布局空间 - 新项目</div>
      <div class="ptabs"><span class="ptab off">页 - 新项目</span><span class="ptab cur">布局空间 - 新项目</span></div>
      <div class="pane">
        <label class="lb">筛选器: (F)</label>
        <div class="dd">- 未激活 -</div>
        <label class="lb">数值: (V)</label>
        <div class="inp"></div>
        <div class="tree">
          <div class="tn root">
            <i class="pm"></i><i class="dots"></i><svg class="ti"><use href="#tc"/></svg><b>1</b>
          </div>
          <div class="tn kid"><i class="conn"></i><svg class="ti2"><use href="#ti"/></svg><span class="sel">逻辑组件</span></div>
          <div class="tn kid"><i class="conn"></i><svg class="ti2"><use href="#ti"/></svg><span>逻辑组件</span></div>
          <div class="tn kid"><i class="conn"></i><svg class="ti2"><use href="#ti"/></svg><span>逻辑组件</span></div>
        </div>
        <div class="ttabs"><span class="tt act">树</span><span class="tt dim">列表</span></div>
      </div>
      <div class="phead ph2">图形预览</div>
      <div class="pv">
        <svg class="pvimg" viewBox="7 708 285 302">
          <polygon points="120.700,724 280.700,804 280.700,809 291.700,816 291.700,949.300 177.700,1005.300 7.300,920 7.300,787.300 18.300,780 18.300,775" fill="#878ba0"/>
          <polygon points="18.300,775 120.700,724 280.700,804 177.700,854" fill="#6f7286"/>
          <polygon points="26,778.300 120.700,731.700 271.700,807.300 177.700,851.700" fill="#878ba0"/>
          <polygon points="7.300,787.300 18.300,780 177.700,860 280.700,809.300 291.700,816 177.700,872.700" fill="#a0a2bd"/>
          <polygon points="18.300,775 177.700,854 280.700,804 280.700,809.300 177.700,860 18.300,780" fill="#7c7f96"/>
          <g fill="none" stroke="#000" class="crisp">
            <path d="M18.300 775L120.700 724L280.700 804L177.700 854ZM18.300 775v5L177.700 860L280.700 809.300V804M177.700 854v6"/>
            <path d="M26 778.300L120.700 731.700L271.700 807.300L177.700 851.700Z" stroke-width="2"/>
            <path d="M120.700 731.700V825"/>
            <path d="M7.300 787.300V920L177.700 1005.300L291.700 949.300V816L177.700 872.700L7.300 787.300ZM177.700 872.700V1005.300"/>
          </g>
        </svg>
      </div>
    </aside>

    <section class="center">
      <div class="doctabs"><i class="dt-arrow"></i></div>
      <div class="frame">
        <div class="canvas">
          <svg class="scene" viewBox="309 158 1578 856">
            <polygon points="577,710 1035,480 1618.500,772 1160.500,1001.700" fill="url(#plate)"/>
            <polygon points="786,418 1160,606 1410,481 1410,773 1160.500,895 786,711.700" fill="#888ca1"/>
            <polygon points="786,415 1160,602 1410,478 1410,481 1160,606 786,418" fill="#a9abb9"/>
            <polygon points="786,388 1035.400,263.300 1410,450.700 1160.300,576" fill="#777a8b"/>
            <polygon points="786,388 1160.300,576 1160.300,602.300 786,415.300" fill="#888ca1"/>
            <polygon points="1160.300,576 1410,450.700 1410,477.700 1160.300,602.300" fill="#888ca1"/>
            <g class="crisp" fill="none" stroke="#000">
              <path d="M786 388L1035.400 263.300L1410 450.700L1160.300 576ZM786 388V415.300L1160.300 602.300L1410 477.700V450.700M1160.300 576V602.300"/>
            </g>
            <use href="#mk" x="784" y="710"/><use href="#mk" x="972" y="804"/><use href="#mk" x="1160.500" y="899"/><use href="#mk" x="1286" y="836"/><use href="#mk" x="1410.500" y="773"/>
            <g class="crisp" fill="none" stroke="#ffff00">
              <path d="M786 606V418.700L1160.500 606L1410.500 481V773L1160.500 895L786 711.700M1160.500 606V895"/>
            </g>
            <path class="crisp" d="M786 606V705" stroke="#eef0e4" fill="none"/>
            <path d="M403 962V945" stroke="#0000b4" stroke-width="2.500"/><path d="M399.500 947l3.500-11 3.500 11z" fill="#0000b4"/>
            <path d="M403 962l14-7" stroke="#009a00" stroke-width="2.500"/><path d="M413 951l12-1-6 9z" fill="#009a00"/>
            <path d="M403 962l13 6" stroke="#b40000" stroke-width="2.500"/><path d="M412 964l12 8h-12z" fill="#b40000"/>
          </svg>
          <div class="act1">激活 Windows</div>
          <div class="act2">转到“设置”以激活 Windows。</div>
        </div>
      </div>
    </section>

    <aside class="vbar">
      <i class="vgrip"></i>
      <svg class="ic"><use href="#v1"/></svg><svg class="ic"><use href="#v2"/></svg><svg class="ic"><use href="#v3"/></svg><svg class="ic"><use href="#v4"/></svg><i class="vsep"></i>
      <svg class="ic"><use href="#v5"/></svg><svg class="ic"><use href="#v6"/></svg><svg class="ic"><use href="#v7"/></svg><svg class="ic"><use href="#v8"/></svg><i class="vsep"></i>
      <svg class="ic"><use href="#v9"/></svg><svg class="ic"><use href="#va"/></svg><i class="vsep"></i>
      <svg class="ic"><use href="#vb"/></svg><svg class="ic"><use href="#vc"/></svg><i class="vbrk"></i>
      <i class="vgrip"></i>
      <svg class="ic"><use href="#vd"/></svg><svg class="ic"><use href="#ve"/></svg><svg class="ic"><use href="#vf"/></svg><svg class="ic"><use href="#vg"/></svg><svg class="ic"><use href="#vh"/></svg><i class="vsep"></i>
      <svg class="ic"><use href="#vi"/></svg><svg class="ic"><use href="#vj"/></svg><svg class="ic"><use href="#vk"/></svg><svg class="ic"><use href="#vl"/></svg><svg class="ic"><use href="#vm"/></svg><svg class="ic"><use href="#vn"/></svg><i class="vsep"></i>
      <svg class="ic"><use href="#vo"/></svg><i class="vsep"></i>
      <svg class="ic"><use href="#vp"/></svg><svg class="ic"><use href="#vq"/></svg><svg class="ic"><use href="#vr"/></svg><i class="vsep"></i>
      <svg class="ic"><use href="#d0"/></svg><svg class="ic"><use href="#da"/></svg><svg class="ic"><use href="#db"/></svg><svg class="ic"><use href="#dd"/></svg><svg class="ic"><use href="#de"/></svg><svg class="ic"><use href="#df"/></svg><svg class="ic"><use href="#dg"/></svg>
    </aside>
  </main>

  <footer class="status">
    <div class="sc s0"></div>
    <div class="sc s1">打开: 10.00 mm</div>
    <div class="sc s2">图形 1:1</div>
    <div class="sc s3"></div>
    <div class="sc s4"><svg class="noent" viewBox="0 0 14 14"><circle cx="7" cy="7" r="7" fill="#d0402a"/><rect x="2.500" y="5.500" width="9" height="3" fill="#fff"/></svg></div>
  </footer>

  <div class="menu">
    <div class="mi"><i class="mc"></i><span>新建... (N)</span></div>
    <div class="mi"><i class="mc"></i><span>打开 (O)</span></div>
    <div class="mi dis"><i class="mc"></i><span>在新窗口中打开 (W)</span></div>
    <div class="mi"><i class="mc"></i><span>关闭 (C)</span></div>
    <div class="ms"></div>
    <div class="mi dis"><svg class="mc"><use href="#mc"/></svg><span>剪切</span><em>Ctrl+X</em></div>
    <div class="mi dis"><svg class="mc"><use href="#mp"/></svg><span>复制</span><em>Ctrl+C</em></div>
    <div class="mi"><svg class="mc"><use href="#mv"/></svg><span>粘贴</span><em>Ctrl+V</em></div>
    <div class="ms"></div>
    <div class="mi"><svg class="mc"><use href="#md"/></svg><span>删除 (L)</span><em>Delete</em></div>
    <div class="ms"></div>
    <div class="mi"><i class="mc"></i><span>更新主要组件 (U)</span></div>
    <div class="mi"><i class="mc"></i><span>更新部件放置 (D)</span></div>
    <div class="mi dis"><i class="mc"></i><span>更换部件 ...</span></div>
    <div class="mi dis"><i class="mc"></i><span>迁移部件</span></div>
    <div class="mi"><i class="mc"></i><span>编辑图例位置... (T)</span></div>
    <div class="mi dis"><i class="mc"></i><span>编辑修订标记... (E)</span></div>
    <div class="mi dis"><i class="mc"></i><span>删除修订标记 (V)</span></div>
    <div class="ms"></div>
    <div class="mi"><i class="mc"></i><span>转到(关联参考) ... (F)</span></div>
    <div class="mi"><i class="mc"></i><span>转到(全部表达类型)... (Y)</span></div>
    <div class="mi"><i class="mc"></i><span>转到(图形) (G)</span><em>Ctrl+J</em></div>
    <div class="mi dis"><i class="mc"></i><span>直接激活 (A)</span></div>
    <div class="mi dis"><i class="mc"></i><span>取消直接激活 (R)</span></div>
    <div class="mi"><i class="mc"></i><span>插入查找结果列表 (I)</span><em>Ctrl+I</em></div>
    <div class="ms"></div>
    <div class="mi"><i class="mc"></i><span>显示 (S)</span><i class="sub"></i></div>
    <div class="mi"><i class="mc"></i><span>隐藏 (H)</span></div>
    <div class="mi"><i class="mc"></i><span>简化显示 (M)</span></div>
    <div class="ms"></div>
    <div class="mi"><i class="mc"></i><span>预选列表</span></div>
    <div class="mi"><i class="mc"></i><span>配置显示...</span></div>
    <div class="ms"></div>
    <div class="mi dis"><i class="mc"></i><span>生成安装面</span></div>
    <div class="mi"><i class="mc"></i><span>安装面</span><i class="sub"></i></div>
    <div class="mi dis"><i class="mc"></i><span>区域大小 (Z)</span></div>
    <div class="ms"></div>
    <div class="mi"><svg class="mc"><use href="#mt"/></svg><span>表格式编辑 (B)</span></div>
    <div class="mi hot"><i class="mc"></i><span>属性... (P)</span></div>
    <div class="mi dis"><i class="mc"></i><span>属性(全局)...</span></div>
  </div>

  <div class="wm">CSDN @平行的时光线</div>
</div>
</body>
</html>
```

FILE: styles.css
```css
* { box-sizing: border-box; }
html, body { margin: 0; padding: 0; }
body {
  font-family: "Noto Sans CJK SC", "Noto Sans", sans-serif;
  font-size: 13px;
  color: #000;
  background: #fff;
}
i, em { font-style: normal; display: block; }
.defs { position: absolute; width: 0; height: 0; overflow: hidden; }
.app { position: relative; width: 1920px; height: 1040px; display: flex; flex-direction: column; overflow: hidden; }

/* title + menu */
.title { height: 23px; flex: none; display: flex; align-items: center; background: #fff; border-bottom: 1px solid #f0f0f0; }
.logo { width: 16px; height: 16px; margin: 0 5px 0 2px; flex: none; }
.t-main { width: 370px; flex: none; white-space: nowrap; letter-spacing: -0.15px; padding-bottom: 2px; }
.t-rest { flex: none; padding-bottom: 2px; }
.win { margin-left: auto; display: flex; }
.wb { width: 46px; height: 22px; display: block; }
.menubar { height: 24px; flex: none; display: flex; align-items: center; gap: 13.5px; padding-left: 17px; padding-bottom: 2px; position: relative; background: #fff; border-bottom: 1px solid #b4b4b4; }
.hgrip { position: absolute; left: 4px; top: 3px; width: 2px; height: 17px; background: repeating-linear-gradient(to bottom, #bbb 0 2px, transparent 2px 4px); }

/* toolbars */
.row { height: 28px; flex: none; display: flex; background: #fff; }
.row-last { border-bottom: 1px solid #b0b0b0; height: 28px; }
.seg { height: 28px; display: flex; align-items: center; padding-left: 3px; padding-right: 1px; border-right: 1px solid #b4b4b4; border-bottom: 1px solid #b4b4b4; flex: none; }
.row-last .seg { height: 27px; border-bottom: 0; }
.seg-right { margin-left: auto; border-right: 0; background: #f9f9f9; padding-right: 2px; }
.grip { width: 2px; height: 20px; margin: 0 4px 0 1px; flex: none; background: repeating-linear-gradient(to bottom, #bbb 0 2px, transparent 2px 4px); }
.ic { width: 24px; height: 24px; flex: none; display: block; overflow: visible; }
.ic.on { background: #cce4f7; box-shadow: inset 0 0 0 1px #99d1ff; }
.sep { width: 1px; height: 20px; margin: 0 5px 0 2px; background: #999; flex: none; }
.gap { flex: none; }
.g216 { width: 216px; }
.g252 { width: 252px; }
.g212 { width: 212px; }
.tl { font: 700 11px "Liberation Sans", sans-serif; fill: #b5522a; }
.t100 { font: 700 7.500px "Liberation Sans", sans-serif; fill: #2e8b57; }
.t128 { font: 700 9px "Liberation Sans", sans-serif; fill: #f0a818; }
.tser { font: 700 15px "Liberation Serif", serif; fill: #999; }
.tser2 { font: 400 24px "Liberation Serif", serif; fill: #888; text-anchor: middle; }

/* main */
.main { flex: 1; min-height: 0; display: flex; }
.left { width: 304px; flex: none; display: flex; flex-direction: column; background: #fff; }
.phead { height: 24px; flex: none; padding-left: 4px; line-height: 21px; background: linear-gradient(to bottom, #9ab6d6, #d3dfec); }
.ph2 { height: 23px; margin-top: 4px; background: linear-gradient(to bottom, #b6cadf, #e6edf4); }
.ptabs { height: 27px; flex: none; display: flex; background: #f4f4f4; }
.ptab { padding-left: 8px; line-height: 26px; white-space: nowrap; }
.ptab.off { width: 83px; color: #808080; background: #f0f0f0; }
.ptab.cur { flex: 1; padding-left: 5px; background: #f8f8f8; }
.pane { height: 496px; flex: none; display: flex; flex-direction: column; padding-left: 5px; background: #f5f5f5; border-left: 2px solid #c8c8c8; border-bottom: 1px solid #c8c8c8; }
.lb { height: 22px; flex: none; line-height: 20px; margin-top: 6px; margin-left: -1px; }
.dd { height: 25px; flex: none; margin-top: 2px; padding-left: 4px; line-height: 22px; background: #e3e3e3; border: 1px solid #b8b8b8; }
.dd + .lb { margin-top: 6px; }
.inp { height: 25px; flex: none; margin-top: 2px; background: #f4f4f4; border: 1px solid #aaa; border-top: 2px solid #777; border-left: 2px solid #888; }
.tree { height: 347px; flex: none; margin-top: 9px; padding-top: 0; background: #fff; border: 1px solid #a8a8a8; border-bottom: 0; border-top-color: #777; }
.tn { height: 20px; display: flex; align-items: center; }
.root { height: 20px; padding-left: 4px; }
.pm { width: 9px; height: 9px; flex: none; border: 1px solid #8a8a8a; background: linear-gradient(#8a8a8a, #8a8a8a) center / 5px 1px no-repeat; }
.dots { width: 6px; flex: none; border-top: 1px dotted #888; }
.ti { width: 18px; height: 18px; flex: none; display: block; overflow: visible; }
.root b { margin-left: 6px; font-weight: 700; line-height: 18px; padding-bottom: 2px; }
.kid { padding-left: 29px; }
.conn { width: 11px; height: 11px; flex: none; align-self: flex-start; border-left: 1px dotted #777; border-bottom: 1px dotted #777; }
.ti2 { width: 16px; height: 16px; flex: none; display: block; }
.kid span { margin-left: 3px; padding: 0 3px; height: 19px; line-height: 17px; flex: none; }
.kid .sel { flex: 1; background: #0078d7; color: #fff; outline: 1px dotted #cfe4f7; outline-offset: -1px; }
.ttabs { height: 26px; flex: none; display: flex; align-items: stretch; border-top: 1px solid #555; background: #f5f5f5; }
.tt { line-height: 22px; padding: 0 5px; }
.tt.act { width: 27px; margin-top: -1px; background: #f5f5f5; border-left: 1px solid #555; border-right: 1px solid #555; border-bottom: 1px solid #555; }
.tt.dim { color: #808080; width: 41px; border-right: 1px solid #c0c0c0; margin: 2px 0 2px 0; line-height: 18px; padding-left: 5px; }
.pv { flex: 1; min-height: 0; margin: 2px 7px 3px 1px; padding-left: 5px; background: #fff; border-left: 1px solid #999; border-top: 1px solid #777; border-bottom: 1px solid #d8d8d8; }
.pvimg { display: block; width: 285px; height: 302px; background: linear-gradient(to bottom, #fff, #b9b9b9); }

.center { flex: 1; min-width: 0; display: flex; flex-direction: column; background: #f4f4f4; }
.doctabs { height: 23px; flex: none; display: flex; align-items: center; justify-content: flex-end; padding-right: 8px; background: #f4f4f4; }
.dt-arrow { width: 0; height: 0; border-left: 5px solid transparent; border-right: 5px solid transparent; border-top: 5px solid #000; }
.frame { flex: 1; min-height: 0; display: flex; padding: 3px 4px 4px 4px; background: #b6cce6; }
.canvas { position: relative; flex: 1; min-width: 0; background: linear-gradient(to bottom, #fff, #bbb); border-top: 1px solid #555; border-left: 1px solid #777; }
.scene { display: block; width: 100%; height: 100%; }
.crisp { shape-rendering: crispEdges; }
.act1, .act2 { position: absolute; color: rgba(120, 120, 120, 0.5); white-space: nowrap; }
.act1 { left: 1322px; top: 782px; font-size: 20px; line-height: 30px; }
.act2 { left: 1322px; top: 810px; font-size: 14px; line-height: 22px; }

.vbar { width: 28px; flex: none; overflow: hidden; display: flex; flex-direction: column; align-items: center; background: #fff; border-left: 1px solid #c8c8c8; }
.vgrip { width: 22px; height: 2px; margin: 4px 0; flex: none; background: repeating-linear-gradient(to right, #bbb 0 2px, transparent 2px 5px); }
.vsep { width: 20px; height: 1px; flex: none; margin: 2px 0 5px; background: #999; }
.vbrk { align-self: stretch; height: 1px; flex: none; margin-top: 1px; background: #b4b4b4; }

/* status */
.status { height: 22px; flex: none; display: flex; align-items: center; background: #f0f0f0; border-top: 1px solid #d0d0d0; }
.sc { height: 19px; line-height: 17px; flex: none; padding-left: 4px; border-left: 1px solid #d0d0d0; color: #444; font-size: 13px; }
.s0 { width: 1413px; border-left: 0; }
.s1 { width: 219px; }
.s2 { width: 126px; }
.s3 { width: 82px; }
.s4 { width: 80px; padding-left: 6px; }
.noent { display: block; width: 14px; height: 14px; margin-top: 3px; }

/* popup menu */
.menu { position: absolute; left: 164px; top: 0; width: 230px; height: 773px; padding: 0 0 2px; background: #efefef; border: 1px solid #a0a0a0; box-shadow: 4px 4px 2px rgba(0, 0, 0, 0.3); }
.mi { height: 22px; display: flex; align-items: center; padding-right: 12px; white-space: nowrap; }
.mi span, .mi em { padding-bottom: 1px; }
.mc { width: 24px; height: 24px; flex: none; display: block; margin: -1px 6px -1px 0; overflow: visible; }
.mi em { margin-left: auto; font-size: 13px; }
.mi.dis { color: #808080; }
.ms { height: 1px; margin: 4px 0 3px 24px; background: #d4d4d4; }
.sub { margin-left: auto; margin-right: -4px; width: 0; height: 0; border-top: 5px solid transparent; border-bottom: 5px solid transparent; border-left: 5px solid #000; }
.mi.hot { margin: 0 1px; border: 1px solid #f9b800; border-radius: 2px; background: linear-gradient(to bottom, #fff2dc 0%, #ffe0a8 35%, #ffcf6a 40%, #ffd97f 100%); }
.mi.hot .mc { width: 23px; margin-left: -1px; }
.wm { position: absolute; left: 1713px; top: 1005px; font-size: 19.500px; line-height: 30px; color: rgba(80, 80, 80, 0.72); white-space: nowrap; }
```
